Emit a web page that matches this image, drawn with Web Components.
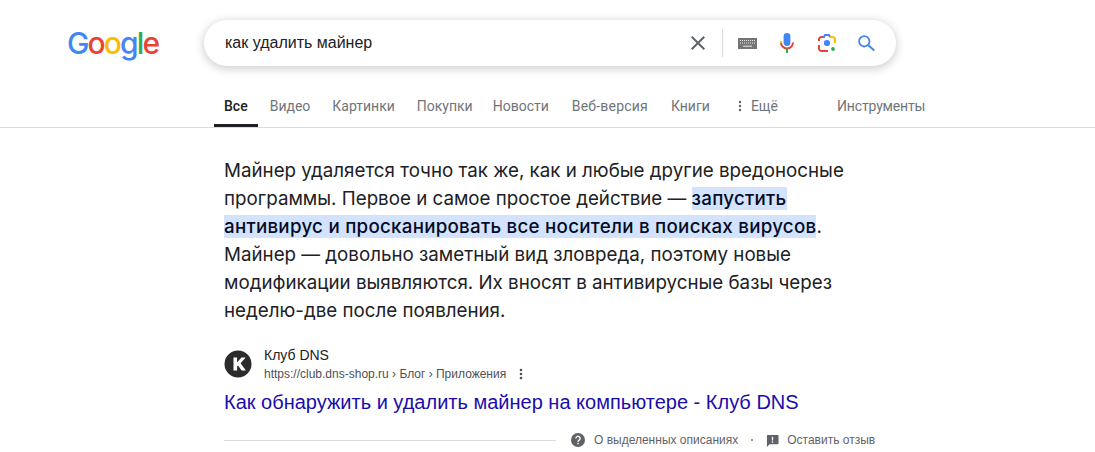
<!DOCTYPE html>
<html lang="ru">
<head>
<meta charset="utf-8">
<title>как удалить майнер</title>
<style>
html, body { margin: 0; background: #fff; }
body { width: 1095px; height: 452px; overflow: hidden; font-family: "Liberation Sans", Arial, sans-serif; }
</style>
</head>
<body>
<g-header></g-header>
<g-tabs></g-tabs>
<g-snippet>
    Майнер удаляется точно так же, как и любые другие вредоносные<br>
    программы. Первое и самое простое действие — <mark>запустить</mark><br>
    <mark>антивирус и просканировать все носители в поисках вирусов</mark>.<br>
    Майнер — довольно заметный вид зловреда, поэтому новые<br>
    модификации выявляются. Их вносят в антивирусные базы через<br>
    неделю-две после появления.
</g-snippet>
<g-source></g-source>
<g-feedback></g-feedback>

<script>
class GSearchBox extends HTMLElement {
    constructor() {
        super();
        this.root = this.attachShadow({ mode: "open" });
        this.root.innerHTML = /*html*/`
            <style>
            :host {
                display: flex;
                align-items: center;
                width: 692px;
                height: 46px;
                box-sizing: border-box;
                padding: 0 21px;
                border-radius: 23px;
                background: #fff;
                box-shadow: 0 2px 8px 1px rgba(64,60,67,.24);
                font-size: 16px;
                color: #202124;
            }
            .query { flex: 1; }
            .icons { display: flex; align-items: center; }
            svg { display: block; }
            .clear { margin-right: 17px; }
            .sep { width: 1px; height: 28px; background: #dadce0; margin-right: 15px; }
            .kbd { margin-right: 23px; }
            .mic { margin-right: 24px; }
            .lens { margin-right: 22px; }
            </style>
            <span class="query">как удалить майнер</span>
            <div class="icons">
                <svg class="clear" width="14" height="14" viewBox="0 0 14 14"><path d="M.7.7l12.6 12.6M13.3.7L.7 13.3" stroke="#5f6368" stroke-width="2" fill="none"/></svg>
                <div class="sep"></div>
                <svg class="kbd" width="19" height="11" viewBox="0 0 19 11">
                    <rect width="19" height="11" fill="#757575"/>
                    <path d="M2 2.5h15M2 5h15" stroke="#e8e8e8" stroke-width="1" stroke-dasharray="1 1"/>
                    <path d="M5 8.2h9" stroke="#e8e8e8" stroke-width="1"/>
                </svg>
                <svg class="mic" width="14" height="20" viewBox="0 0 14 20">
                    <rect x="3.6" y="0" width="6.8" height="13" rx="3.4" fill="#4285f4"/>
                    <path d="M1 9.5a6 6 0 0 0 6 6 6 6 0 0 0 6-6" stroke="#ea4335" stroke-width="2" fill="none"/>
                    <path d="M1 10V8" stroke="#fbbc05" stroke-width="2"/>
                    <rect x="6" y="15.5" width="2" height="4.5" fill="#34a853"/>
                </svg>
                <svg class="lens" width="18" height="18" viewBox="0 0 18 18">
                    <circle cx="9" cy="9" r="3.1" fill="#4285f4"/>
                    <circle cx="15" cy="15" r="1.9" fill="#34a853"/>
                    <path d="M1 7V5.5A2.5 2.5 0 0 1 3.5 3H6" stroke="#ea4335" stroke-width="2" fill="none"/>
                    <path d="M4.5 3H6l1-2h4l1 2" stroke="#4285f4" stroke-width="2" fill="none"/>
                    <path d="M12 3h2.5A2.5 2.5 0 0 1 17 5.5V9" stroke="#fbbc05" stroke-width="2" fill="none"/>
                    <path d="M1 11v3.5A2.5 2.5 0 0 0 3.5 17H10" stroke="#ea4335" stroke-width="2" fill="none"/>
                </svg>
                <svg class="find" width="17" height="16" viewBox="0 0 17 16">
                    <circle cx="6.3" cy="6.3" r="5.2" stroke="#4285f4" stroke-width="1.8" fill="none"/>
                    <path d="M10 10l6.3 5.5" stroke="#4285f4" stroke-width="2" fill="none"/>
                </svg>
            </div>
        `;
    }
}
customElements.define("g-search-box", GSearchBox);

class GHeader extends HTMLElement {
    constructor() {
        super();
        this.root = this.attachShadow({ mode: "open" });
        this.root.innerHTML = /*html*/`
            <style>
            :host {
                display: flex;
                align-items: center;
                padding: 20px 0 0 67px;
            }
            .logo {
                width: 137px;
                font-family: Inter, sans-serif;
                font-size: 30px;
                font-weight: 500;
                line-height: 44px;
                letter-spacing: -1.9px;
            }
            .b { color: #4285f4; }
            .r { color: #ea4335; }
            .y { color: #fbbc05; }
            .g { color: #34a853; }
            </style>
            <div class="logo"><span class="b">G</span><span class="r">o</span><span class="y">o</span><span class="b">g</span><span class="g">l</span><span class="r">e</span></div>
            <g-search-box></g-search-box>
        `;
    }
}
customElements.define("g-header", GHeader);

class GTabs extends HTMLElement {
    constructor() {
        super();
        this.root = this.attachShadow({ mode: "open" });
        this.root.innerHTML = /*html*/`
            <style>
            :host {
                display: flex;
                height: 41px;
                margin-top: 20px;
                padding-left: 214px;
                border-bottom: 1px solid #dadce0;
                font-family: Roboto, sans-serif;
                font-size: 14px;
                color: #70757a;
            }
            a {
                display: flex;
                align-items: center;
                gap: 9px;
                box-sizing: border-box;
                height: 41px;
                padding: 1px 10px 0;
                margin-right: 2px;
                border-bottom: 3px solid transparent;
            }
            a.on {
                color: #202124;
                font-weight: 500;
                border-bottom-color: #202124;
            }
            a.shop { margin-right: 0; }
            a.news { margin-right: 3px; }
            a.web { margin-right: 3px; letter-spacing: .2px; }
            a.more { margin-left: 6px; }
            a.tools { margin-left: 37px; letter-spacing: -.15px; }
            svg { display: block; }
            </style>
            <a class="on">Все</a>
            <a>Видео</a>
            <a>Картинки</a>
            <a class="shop">Покупки</a>
            <a class="news">Новости</a>
            <a class="web">Веб-версия</a>
            <a>Книги</a>
            <a class="more"><svg width="4" height="12" viewBox="0 0 4 12" fill="#5f6368"><circle cx="2" cy="2" r="1.2"/><circle cx="2" cy="6" r="1.2"/><circle cx="2" cy="10" r="1.2"/></svg>Ещё</a>
            <a class="tools">Инструменты</a>
        `;
    }
}
customElements.define("g-tabs", GTabs);

class GSnippet extends HTMLElement {
    constructor() {
        super();
        this.root = this.attachShadow({ mode: "open" });
        this.root.innerHTML = /*html*/`
            <style>
            :host {
                display: block;
                margin: 29px 0 0 224px;
                font-family: Inter, sans-serif;
                font-size: 18.75px;
                line-height: 28px;
                color: #202124;
                white-space: nowrap;
            }
            ::slotted(mark) {
                background: #d3e3fd;
                color: #040c28;
                font-weight: 500;
                letter-spacing: .25px;
            }
            </style>
            <slot></slot>
        `;
    }
}
customElements.define("g-snippet", GSnippet);

class GSource extends HTMLElement {
    constructor() {
        super();
        this.root = this.attachShadow({ mode: "open" });
        this.root.innerHTML = /*html*/`
            <style>
            :host {
                display: block;
                margin: 21px 0 0 224px;
            }
            .site { display: flex; align-items: center; gap: 12px; height: 36px; }
            .name { font-size: 14px; line-height: 18px; color: #202124; }
            .url { display: flex; align-items: center; font-size: 12px; line-height: 18px; margin-top: 1px; color: #4d5156; }
            .url svg { margin-left: 13px; }
            .title { font-size: 20px; line-height: 26px; margin-top: 7px; color: #1a0dab; white-space: nowrap; }
            svg { display: block; }
            </style>
            <div class="site">
                <svg width="28" height="28" viewBox="0 0 28 28">
                    <circle cx="14" cy="14" r="13.5" fill="#2b2b2b"/>
                    <path d="M9.5 7.5h3.6v5l4.3-5h4.2l-5 5.8 5.3 7.2h-4.3l-3.6-5-.9 1v4H9.5z" fill="#fff"/>
                </svg>
                <div>
                    <div class="name">Клуб DNS</div>
                    <div class="url">https://club.dns-shop.ru › Блог › Приложения
                        <svg width="4" height="12" viewBox="0 0 4 12" fill="#4d5156"><circle cx="2" cy="2" r="1.3"/><circle cx="2" cy="6" r="1.3"/><circle cx="2" cy="10" r="1.3"/></svg>
                    </div>
                </div>
            </div>
            <div class="title">Как обнаружить и удалить майнер на компьютере - Клуб DNS</div>
        `;
    }
}
customElements.define("g-source", GSource);

class GFeedback extends HTMLElement {
    constructor() {
        super();
        this.root = this.attachShadow({ mode: "open" });
        this.root.innerHTML = /*html*/`
            <style>
            :host {
                display: flex;
                align-items: center;
                margin: 18px 0 0 224px;
                font-size: 12px;
                color: #5f6368;
            }
            .line { width: 332px; height: 1px; background: #dadce0; margin-right: 15px; }
            .item { display: flex; align-items: center; }
            svg { display: block; }
            .dot { width: 2px; height: 2px; border-radius: 50%; background: #70757a; margin: 0 13px; }
            </style>
            <div class="line"></div>
            <div class="item">
                <svg width="14" height="14" viewBox="0 0 14 14" style="margin-right:9px">
                    <circle cx="7" cy="7" r="7" fill="#5f6368"/>
                    <path d="M4.9 5.4a2.1 2.1 0 1 1 3.2 1.8c-.7.4-1.1.8-1.1 1.6" stroke="#fff" stroke-width="1.4" fill="none"/>
                    <rect x="6.3" y="9.8" width="1.4" height="1.5" fill="#fff"/>
                </svg>
                <span>О выделенных описаниях</span>
            </div>
            <div class="dot"></div>
            <div class="item">
                <svg width="13" height="13" viewBox="0 0 14 14" style="margin-right:8px">
                    <path d="M1.5 1h11a1 1 0 0 1 1 1v8a1 1 0 0 1-1 1H4l-3 3V2a1 1 0 0 1 .5-1z" fill="#5f6368"/>
                    <rect x="6.3" y="3" width="1.4" height="4" fill="#fff"/>
                    <rect x="6.3" y="8" width="1.4" height="1.4" fill="#fff"/>
                </svg>
                <span>Оставить отзыв</span>
            </div>
        `;
    }
}
customElements.define("g-feedback", GFeedback);
</script>
</body>
</html>
